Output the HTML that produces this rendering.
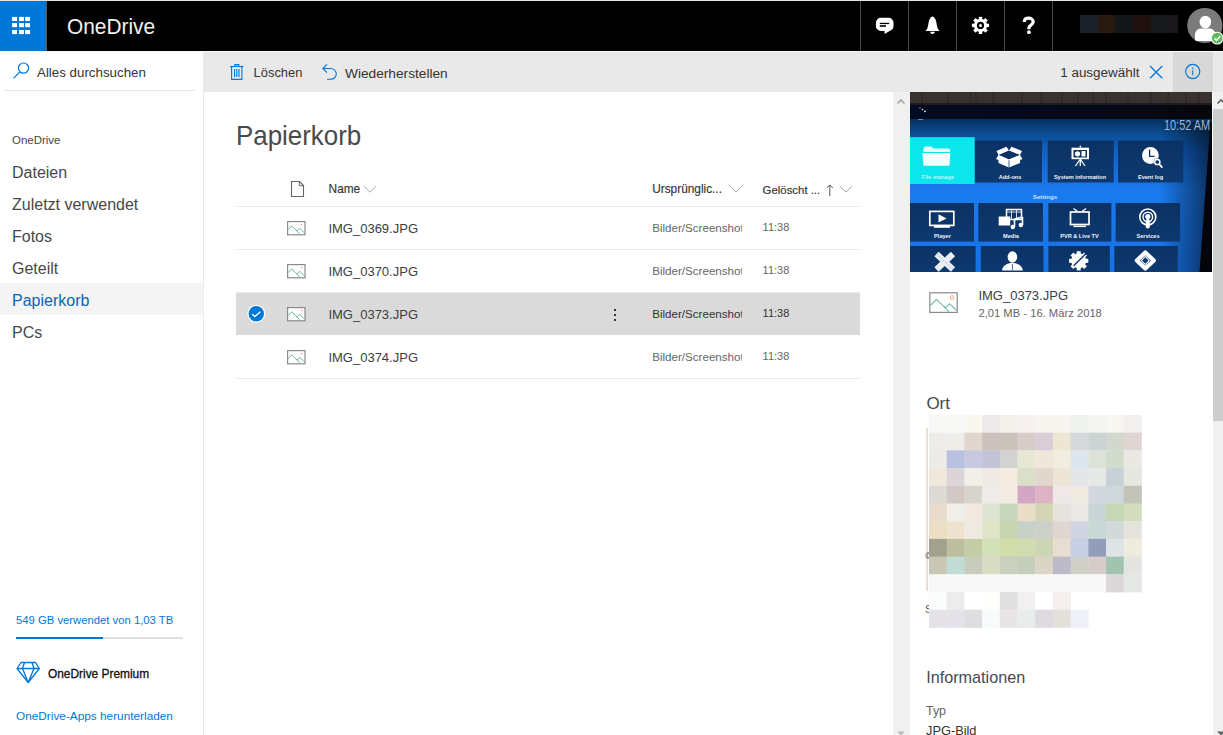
<!DOCTYPE html>
<html><head><meta charset="utf-8">
<style>
*{margin:0;padding:0;box-sizing:border-box}
html,body{width:1223px;height:735px;overflow:hidden;background:#fff;font-family:"Liberation Sans",sans-serif;color:#333}
.a{position:absolute}
.t{position:absolute;white-space:nowrap;line-height:1}
svg{position:absolute;overflow:visible}
</style></head><body>
<!-- top line -->
<div class="a" style="left:0;top:0;width:1223px;height:1px;background:#e4e4e4"></div>
<!-- header -->
<div class="a" style="left:0;top:1px;width:1223px;height:50px;background:#000"></div>
<div class="a" style="left:0;top:51px;width:1223px;height:1px;background:#f8f8f8"></div>
<div class="a" style="left:0;top:1px;width:46px;height:50px;background:#0078d7"></div>
<div class="a" style="left:46px;top:1px;width:1px;height:50px;background:#5a5a5a"></div>
<svg style="left:0;top:0" width="46" height="51">
  <g fill="#fff"><rect x="12.1" y="16.9" width="4.9" height="4.1"/><rect x="19" y="16.9" width="4.9" height="4.1"/><rect x="25.1" y="16.9" width="4.9" height="4.1"/><rect x="12.1" y="23.1" width="4.9" height="4.1"/><rect x="19" y="23.1" width="4.9" height="4.1"/><rect x="25.1" y="23.1" width="4.9" height="4.1"/><rect x="12.1" y="30" width="4.9" height="4.1"/><rect x="19" y="30" width="4.9" height="4.1"/><rect x="25.1" y="30" width="4.9" height="4.1"/></g>
</svg>
<div class="t" style="left:67px;top:16.2px;font-size:22.2px;color:#f0f0f0;transform:scaleX(0.94);transform-origin:0 0">OneDrive</div>

<!-- header dividers -->
<div class="a" style="left:860px;top:1px;width:1px;height:50px;background:#4a4a4a"></div>
<div class="a" style="left:908px;top:1px;width:1px;height:50px;background:#4a4a4a"></div>
<div class="a" style="left:956px;top:1px;width:1px;height:50px;background:#4a4a4a"></div>
<div class="a" style="left:1004px;top:1px;width:1px;height:50px;background:#4a4a4a"></div>
<div class="a" style="left:1052px;top:1px;width:1px;height:50px;background:#4a4a4a"></div>

<!-- header icons -->
<svg style="left:0;top:0" width="1223" height="51">
  <!-- chat -->
  <path d="M881 17.8 H888.5 A5 5 0 0 1 893.5 22.8 V26 A5 5 0 0 1 890 30.8 L884.6 34 L884.6 31 H881 A5 5 0 0 1 875.9 26 V22.8 A5 5 0 0 1 881 17.8 Z" fill="#fff"/>
  <rect x="879.8" y="22.8" width="9.4" height="1.3" fill="#000"/>
  <rect x="879.8" y="25.2" width="6.2" height="1.6" fill="#000"/>
  <!-- bell -->
  <path d="M932.5 16.6 C931.2 16.6 930.4 17.8 929.6 19.3 C928.5 21.5 928.4 25 927.6 27.5 C927 29.3 926 30.3 925.3 31 H939.7 C939 30.3 938 29.3 937.4 27.5 C936.6 25 936.5 21.5 935.4 19.3 C934.6 17.8 933.8 16.6 932.5 16.6 Z" fill="#fff"/>
  <path d="M930 31.8 H935 C934.5 33.4 933.6 34 932.5 34 C931.4 34 930.5 33.4 930 31.8 Z" fill="#fff"/>
  <!-- gear -->
  <g transform="translate(980.5 25.4)" fill="#fff">
    <circle r="6.6"/>
    <rect x="-1.7" y="-8.6" width="3.4" height="17.2"/>
    <rect x="-1.7" y="-8.6" width="3.4" height="17.2" transform="rotate(45)"/>
    <rect x="-1.7" y="-8.6" width="3.4" height="17.2" transform="rotate(90)"/>
    <rect x="-1.7" y="-8.6" width="3.4" height="17.2" transform="rotate(135)"/>
    <circle r="3.6" fill="#000"/>
    <circle r="1.5" fill="#fff"/>
  </g>
  <!-- question -->
  <path d="M1024.3 22 C1024.3 19.3 1026.2 18.2 1028.6 18.2 C1031.2 18.2 1033.2 19.6 1033.2 21.8 C1033.2 23.6 1032 24.5 1030.7 25.4 C1029.5 26.2 1028.9 26.8 1028.9 28.2 V29.2" fill="none" stroke="#fff" stroke-width="3.2"/>
  <circle cx="1028.9" cy="32.2" r="1.9" fill="#fff"/>
  <!-- name blur -->
  <rect x="1080" y="15" width="18" height="18" fill="#1c2029"/>
  <rect x="1098" y="15" width="17" height="18" fill="#28190f"/>
  <rect x="1115" y="15" width="18" height="18" fill="#14161a"/>
  <rect x="1133" y="15" width="18" height="18" fill="#1f120e"/>
  <rect x="1151" y="15" width="17" height="18" fill="#18191c"/>
  <rect x="1168" y="15" width="10" height="18" fill="#1b161a"/>
  <!-- avatar -->
  <defs><clipPath id="av"><circle cx="1204.8" cy="25.5" r="17.6"/></clipPath></defs>
  <circle cx="1204.8" cy="25.5" r="17.6" fill="#7b7b7b"/>
  <g clip-path="url(#av)" fill="#fff">
    <ellipse cx="1205.4" cy="22" rx="5.8" ry="6.3"/>
    <path d="M1195 41 V35 C1195 31 1198 28.6 1201 28.6 H1209.5 C1212.5 28.6 1215.5 31 1215.5 35 V41 Z"/>
  </g>
  <circle cx="1217.2" cy="38.1" r="6.4" fill="#fff"/>
  <circle cx="1217.2" cy="38.1" r="5.3" fill="#5cb85c"/>
  <path d="M1214.4 38.4 L1216.5 40.4 L1220.3 36.1" fill="none" stroke="#fff" stroke-width="1.6"/>
</svg>

<!-- toolbar -->
<div class="a" style="left:203px;top:52px;width:1020px;height:40px;background:#e9e9e9"></div>
<div class="a" style="left:1173px;top:52px;width:40px;height:40px;background:#d8d8d8"></div>
<svg style="left:0;top:0" width="1223" height="92">
  <!-- trash -->
  <g fill="none" stroke="#0078d7" stroke-width="1.1">
    <path d="M230 66.5 H243.5"/>
    <path d="M234.8 66.3 V64.6 H238.8 V66.3"/>
    <path d="M231.6 66.5 V79.4 H241.9 V66.5"/>
    <path d="M234.6 69 V77 M236.8 69 V77 M239 69 V77"/>
  </g>
  <!-- restore -->
  <g fill="none" stroke="#0078d7" stroke-width="1.1">
    <path d="M327 64.3 L322.8 68.5 L327 72.6"/>
    <path d="M323 68.5 H330.5 C333.8 68.5 336.3 71 336.3 74 C336.3 77 333.8 79.3 330.5 79.3 H327"/>
  </g>
  <!-- close X -->
  <path d="M1150 66 L1162.3 78.2 M1162.3 66 L1150 78.2" stroke="#0078d7" stroke-width="1.3" fill="none"/>
  <!-- info -->
  <circle cx="1192.7" cy="71.5" r="7.1" stroke="#0078d7" stroke-width="1.2" fill="none"/>
  <circle cx="1192.7" cy="68.3" r="0.8" fill="#0078d7"/>
  <path d="M1192.7 70.3 V75.2" stroke="#0078d7" stroke-width="1.1"/>
</svg>
<div class="t" style="left:253.6px;top:67.4px;font-size:12.9px;color:#333">Löschen</div>
<div class="t" style="left:345px;top:67px;font-size:13.7px;color:#333">Wiederherstellen</div>
<div class="t" style="left:1060.2px;top:66.3px;font-size:13.46px;color:#333">1 ausgewählt</div>

<!-- nav -->
<div class="a" style="left:203px;top:92px;width:1px;height:643px;background:#eaeaea"></div>
<div class="a" style="left:4px;top:90px;width:191px;height:1px;background:#e6e6e6"></div>
<div class="t" style="left:37px;top:65.7px;font-size:13.34px;color:#333">Alles durchsuchen</div>

<div class="t" style="left:12px;top:134.8px;font-size:11.46px;color:#444">OneDrive</div>
<div class="a" style="left:0;top:283px;width:203px;height:32px;background:#f4f4f4"></div>
<div class="t" style="left:12px;top:164.5px;font-size:16px;color:#484848">Dateien</div>
<div class="t" style="left:12px;top:196.5px;font-size:16px;color:#484848">Zuletzt verwendet</div>
<div class="t" style="left:12px;top:228.5px;font-size:16px;color:#484848">Fotos</div>
<div class="t" style="left:12px;top:260.5px;font-size:16px;color:#484848">Geteilt</div>
<div class="t" style="left:12px;top:292.5px;font-size:16px;color:#0a64b4">Papierkorb</div>
<div class="t" style="left:12px;top:324.5px;font-size:16px;color:#484848">PCs</div>

<div class="t" style="left:16px;top:615px;font-size:11.29px;color:#0078d7">549 GB verwendet von 1,03 TB</div>
<div class="a" style="left:16px;top:637px;width:167px;height:2px;background:#e0e0e0"></div>
<div class="a" style="left:16px;top:637px;width:87px;height:2px;background:#0078d7"></div>
<div class="t" style="left:48px;top:668.9px;font-size:11.9px;color:#111;-webkit-text-stroke:0.3px #111">OneDrive Premium</div>
<div class="t" style="left:16px;top:711.4px;font-size:11.82px;color:#0078d7">OneDrive-Apps herunterladen</div>

<!-- main -->
<div class="t" style="left:236px;top:122.2px;font-size:27.2px;color:#4a4a4a;transform:scaleX(0.952);transform-origin:0 0">Papierkorb</div>


<!-- list header -->
<svg style="left:290px;top:180px" width="16" height="18" viewBox="0 0 16 18">
  <path d="M1.5 1.5 H9.5 L13.5 5.5 V16.5 H1.5 Z" fill="none" stroke="#666" stroke-width="1.1"/>
  <path d="M9.3 1.5 V5.7 H13.5" fill="none" stroke="#666" stroke-width="1"/>
</svg>
<div class="t" style="left:328.6px;top:184.4px;font-size:11.85px;color:#333;-webkit-text-stroke:0.15px #333">Name</div>
<svg style="left:0;top:0" width="900" height="200">
  <path d="M364 186.2 L370 192.2 L376 186.2" fill="none" stroke="#a6a6a6" stroke-width="1"/>
  <path d="M730.3 186.2 L736 192 L741.7 186.2" fill="none" stroke="#a6a6a6" stroke-width="1"/>
  <path d="M839.8 186.2 L846 192 L852.2 186.2" fill="none" stroke="#a6a6a6" stroke-width="1"/>
  <path d="M829.8 185 V196 M826.8 188 L829.8 185 L832.8 188" fill="none" stroke="#444" stroke-width="0.9"/>
</svg>
<div class="t" style="left:652.2px;top:184.4px;font-size:11.85px;color:#333;-webkit-text-stroke:0.15px #333">Ursprünglic...</div>
<div class="t" style="left:762.6px;top:184.8px;font-size:11.4px;color:#333;-webkit-text-stroke:0.15px #333">Gelöscht ...</div>
<div class="a" style="left:236px;top:206px;width:624px;height:1px;background:#eaeaea"></div>
<div class="a" style="left:236px;top:292px;width:624px;height:43px;background:#dadada"></div>
<div class="a" style="left:236px;top:249px;width:624px;height:1px;background:#eaeaea"></div>
<svg style="left:287px;top:221px" width="19" height="15" viewBox="0 0 19 15">
  <rect x="0.6" y="0.6" width="17.4" height="13.2" fill="#fff" stroke="#8a8a8a" stroke-width="1.2"/>
  <path d="M1.2 8.6 L4.6 4.8 L10.2 10.1 L12.7 7.3 L17.6 12" fill="none" stroke="#6bb6a6" stroke-width="1"/>
  <path d="M9.2 9.2 L13.2 13.4" fill="none" stroke="#6bb6a6" stroke-width="1"/>
  <circle cx="14.7" cy="3.6" r="0.8" fill="#f29d80"/>
</svg>
<div class="t" style="left:328.4px;top:221.50px;font-size:13px;color:#3e3e3e">IMG_0369.JPG</div>
<div class="t" style="left:652.2px;top:222.34px;font-size:11.6px;color:#666;width:90px;overflow:hidden">Bilder/Screenshots</div>
<div class="t" style="left:762.6px;top:222.34px;font-size:11px;color:#666">11:38</div>
<div class="a" style="left:236px;top:292px;width:624px;height:1px;background:#eaeaea"></div>
<svg style="left:287px;top:264px" width="19" height="15" viewBox="0 0 19 15">
  <rect x="0.6" y="0.6" width="17.4" height="13.2" fill="#fff" stroke="#8a8a8a" stroke-width="1.2"/>
  <path d="M1.2 8.6 L4.6 4.8 L10.2 10.1 L12.7 7.3 L17.6 12" fill="none" stroke="#6bb6a6" stroke-width="1"/>
  <path d="M9.2 9.2 L13.2 13.4" fill="none" stroke="#6bb6a6" stroke-width="1"/>
  <circle cx="14.7" cy="3.6" r="0.8" fill="#f29d80"/>
</svg>
<div class="t" style="left:328.4px;top:264.50px;font-size:13px;color:#3e3e3e">IMG_0370.JPG</div>
<div class="t" style="left:652.2px;top:265.34px;font-size:11.6px;color:#666;width:90px;overflow:hidden">Bilder/Screenshots</div>
<div class="t" style="left:762.6px;top:265.34px;font-size:11px;color:#666">11:38</div>
<svg style="left:287px;top:307px" width="19" height="15" viewBox="0 0 19 15">
  <rect x="0.6" y="0.6" width="17.4" height="13.2" fill="#fff" stroke="#8a8a8a" stroke-width="1.2"/>
  <path d="M1.2 8.6 L4.6 4.8 L10.2 10.1 L12.7 7.3 L17.6 12" fill="none" stroke="#6bb6a6" stroke-width="1"/>
  <path d="M9.2 9.2 L13.2 13.4" fill="none" stroke="#6bb6a6" stroke-width="1"/>
  <circle cx="14.7" cy="3.6" r="0.8" fill="#f29d80"/>
</svg>
<div class="t" style="left:328.4px;top:307.50px;font-size:13px;color:#3e3e3e">IMG_0373.JPG</div>
<div class="t" style="left:652.2px;top:308.34px;font-size:11.6px;color:#333;width:90px;overflow:hidden">Bilder/Screenshots</div>
<div class="t" style="left:762.6px;top:308.34px;font-size:11px;color:#333">11:38</div>
<div class="a" style="left:236px;top:378px;width:624px;height:1px;background:#eaeaea"></div>
<svg style="left:287px;top:350px" width="19" height="15" viewBox="0 0 19 15">
  <rect x="0.6" y="0.6" width="17.4" height="13.2" fill="#fff" stroke="#8a8a8a" stroke-width="1.2"/>
  <path d="M1.2 8.6 L4.6 4.8 L10.2 10.1 L12.7 7.3 L17.6 12" fill="none" stroke="#6bb6a6" stroke-width="1"/>
  <path d="M9.2 9.2 L13.2 13.4" fill="none" stroke="#6bb6a6" stroke-width="1"/>
  <circle cx="14.7" cy="3.6" r="0.8" fill="#f29d80"/>
</svg>
<div class="t" style="left:328.4px;top:350.50px;font-size:13px;color:#3e3e3e">IMG_0374.JPG</div>
<div class="t" style="left:652.2px;top:351.34px;font-size:11.6px;color:#666;width:90px;overflow:hidden">Bilder/Screenshots</div>
<div class="t" style="left:762.6px;top:351.34px;font-size:11px;color:#666">11:38</div>
<svg style="left:0;top:0" width="900" height="400">
  <circle cx="256.3" cy="313.7" r="9" fill="#fff"/>
  <circle cx="256.3" cy="313.7" r="7.7" fill="#0078d7"/>
  <path d="M252.2 314.2 L254.8 316.6 L260.4 311.8" fill="none" stroke="#fff" stroke-width="1.3"/>
  <rect x="614" y="309" width="2" height="2" fill="#333"/>
  <rect x="614" y="314" width="2" height="2" fill="#333"/>
  <rect x="614" y="319" width="2" height="2" fill="#333"/>
</svg>


<!-- details image -->
<svg style="left:910px;top:92px" width="302" height="180" viewBox="0 0 302 180">
  <defs>
    <linearGradient id="bgv" x1="0" y1="0" x2="0" y2="1">
      <stop offset="0" stop-color="#06305e"/>
      <stop offset="0.15" stop-color="#06305e"/>
      <stop offset="0.24" stop-color="#0b4f98"/>
      <stop offset="0.32" stop-color="#1260c4"/>
      <stop offset="0.55" stop-color="#1a7aee"/>
      <stop offset="1" stop-color="#1672e6"/>
    </linearGradient>
    <linearGradient id="frame" x1="0" y1="0" x2="1" y2="0">
      <stop offset="0" stop-color="#000" stop-opacity="0"/>
      <stop offset="1" stop-color="#000" stop-opacity="0.6"/>
    </linearGradient>
    <linearGradient id="tile" x1="0" y1="0" x2="0" y2="1">
      <stop offset="0" stop-color="#0c3264"/>
      <stop offset="1" stop-color="#0d3970"/>
    </linearGradient>
  </defs>
  <rect x="0" y="0" width="302" height="180" fill="url(#bgv)"/>
  <rect x="0" y="0" width="302" height="11.5" fill="#3b3230"/>
  <rect x="0" y="11" width="302" height="2" fill="#1e1a22"/>
  <g stroke="#2a201d" stroke-width="0.7">
    <path d="M12 0V13M38 0V13M61 0V12M66 0V13M83 0V13M112 0V13M131 0V13M152 0V12M168 0V13M183 0V13M196 0V13M218 0V13M241 0V13M258 0V13M276 0V13M289 0V13"/>
  </g>
  <linearGradient id="band" x1="0" y1="0" x2="1" y2="0"><stop offset="0" stop-color="#030b22"/><stop offset="0.6" stop-color="#050a1a"/><stop offset="1" stop-color="#07070c"/></linearGradient>
  <rect x="0" y="13" width="302" height="14" fill="url(#band)"/>
  <circle cx="10" cy="15.8" r="0.6" fill="#dde6f4"/><circle cx="12.5" cy="17.5" r="0.8" fill="#e8eef8"/><circle cx="15" cy="19.3" r="0.9" fill="#e8eef8"/><rect x="8" y="27" width="5" height="0.8" fill="#8aa0c0"/>
  <!-- right dark frame -->
  <path d="M250 30 L302 30 L290 180 L250 180 Z" fill="url(#frame)"/>
  <path d="M300.5 30 L302 30 V180 H289.5 Z" fill="#03050a"/>
  <!-- tiles -->
  <g fill="url(#tile)">
    <rect x="65" y="48.5" width="67" height="42"/>
    <rect x="137.7" y="48.5" width="66" height="42"/>
    <rect x="208" y="48.5" width="65.4" height="42"/>
    <rect x="0" y="111" width="64" height="38.6"/>
    <rect x="68.3" y="111" width="64.7" height="38.6"/>
    <rect x="138.4" y="111" width="63" height="38.6"/>
    <rect x="205.6" y="111" width="64.6" height="38.6"/>
    <rect x="0" y="154" width="65.6" height="26"/>
    <rect x="70.8" y="154" width="62.7" height="26"/>
    <rect x="138.4" y="154" width="61.4" height="26"/>
    <rect x="204.3" y="154" width="63.4" height="26"/>
  </g>
  <rect x="0" y="45.2" width="64.6" height="46.8" fill="#0ae6ec"/>
  <text x="254" y="37.8" font-family="Liberation Sans" font-size="14.2" fill="#a3b6d2" textLength="46" lengthAdjust="spacingAndGlyphs">10:52 AM</text>
  <text x="135" y="106.8" font-family="Liberation Sans" font-size="6.2" font-weight="700" fill="#cfe2f8" text-anchor="middle">Settings</text>
  <g font-family="Liberation Sans" font-size="5.6" font-weight="700" fill="#eef3fa" text-anchor="middle">
    <text x="28" y="87.3" fill="#bdf4f6">File manage</text>
    <text x="100" y="86.6">Add-ons</text>
    <text x="170" y="87">System information</text>
    <text x="240.5" y="87">Event log</text>
    <text x="32.5" y="146.4">Player</text>
    <text x="101" y="146.4">Media</text>
    <text x="169.5" y="146.4">PVR &amp; Live TV</text>
    <text x="238" y="146.4">Services</text>
  </g>
  <g fill="#fff">
    <!-- folder -->
    <path d="M13.5 57 Q13.5 54.5 15.5 54.5 H21.5 L23.5 56.5 H38.5 Q40 56.5 40 58 V60 H13.5 Z" fill="#e6f9fa"/>
    <path d="M12.4 61 H40.4 L39.4 73.8 H13.4 Z" fill="#f2fdfd"/>
    <!-- box -->
    <path d="M88.5 63 L99 58.5 L110 63 L99 67.5 Z" fill="#0c3264"/>
    <path d="M88.5 63 L99 67.5 L110 63 V71 L99 75.5 L88.5 71 Z"/>
    <path d="M99 67.5 V75.5" stroke="#0c3264" stroke-width="0.8"/>
    <path d="M88.5 63 L86.5 59 L96.5 54.7 L99 58.5 Z M110 63 L112 59 L101.5 54.7 L99 58.5 Z"/>
    <path d="M88.5 63 L86 67 L96.5 71.5 L99 67.5 Z M110 63 L112.5 67 L102 71.5 L99 67.5 Z"/>
    <!-- easel -->
    <rect x="161.5" y="55.7" width="17.5" height="11.5"/>
    <rect x="163.5" y="58" width="13.5" height="7.5" fill="#0c3264"/>
    <circle cx="167.5" cy="61.8" r="2.6"/>
    <rect x="171.5" y="59" width="4" height="5.5"/>
    <rect x="169.6" y="53.7" width="1.5" height="2"/>
    <path d="M170.3 67 L165.5 74 M170.3 67 L175 74 M170.3 67 V74" stroke="#fff" stroke-width="1.3"/>
    <!-- clock -->
    <circle cx="240.4" cy="63.5" r="8.4"/>
    <path d="M239.6 57.5 V64.3 H244.5" stroke="#0c3264" stroke-width="1.3" fill="none"/>
    <circle cx="247.3" cy="70" r="3.6" fill="#0c3264"/>
    <circle cx="247.3" cy="70" r="2.6" fill="none" stroke="#fff" stroke-width="1.5"/>
    <path d="M249.2 72 L252.3 75.6" stroke="#fff" stroke-width="1.8"/>
    <!-- player tv -->
    <rect x="19.8" y="119.4" width="24" height="14" fill="none" stroke="#fff" stroke-width="1.7"/>
    <path d="M28.5 122.3 L36.5 126.4 L28.5 130.5 Z"/>
    <rect x="24" y="134" width="16" height="1.8"/>
    <!-- media -->
    <rect x="96.5" y="117.5" width="15" height="10" fill="none" stroke="#fff" stroke-width="1.5"/>
    <path d="M96.5 120 H111.5 M101.5 117.5 V127.5 M106.5 117.5 V127.5" stroke="#fff" stroke-width="0.8"/>
    <rect x="88.7" y="124.5" width="11.5" height="9"/>
    <path d="M104.5 127 V135 M112.5 125 V133 M104.5 127 L112.5 125" stroke="#fff" stroke-width="1.6" fill="none"/>
    <circle cx="102.8" cy="135" r="2.2"/><circle cx="110.8" cy="133" r="2.2"/>
    <!-- pvr tv -->
    <rect x="160.5" y="120" width="18.5" height="12.5" fill="none" stroke="#fff" stroke-width="1.7"/>
    <path d="M163.5 116.5 L167.5 119.5 M176 116.5 L172 119.5" stroke="#fff" stroke-width="1.2"/>
    <rect x="163.5" y="133.6" width="12.5" height="1.5"/>
    <!-- services -->
    <circle cx="237.8" cy="125" r="8" fill="none" stroke="#fff" stroke-width="1.6"/>
    <circle cx="237.8" cy="125" r="4.8" fill="none" stroke="#fff" stroke-width="1.4"/>
    <circle cx="237.8" cy="124.5" r="2.6"/>
    <rect x="235.8" y="127" width="4" height="9.5" rx="1.8"/>
    <!-- tools -->
    <path d="M26.5 162 L43 177.5 M43 162 L26.5 177.5" stroke="#e8eef6" stroke-width="6.2"/>
    <path d="M26.5 162 L43 177.5" stroke="#9fb0c8" stroke-width="1" stroke-dasharray="1.5 1.5"/>
    <!-- person -->
    <ellipse cx="102.4" cy="165" rx="4.8" ry="5.8"/>
    <path d="M92 178.5 C92.5 173.5 97 171 102.4 171 C108 171 112.3 173.5 112.8 178.5 Z"/>
    <path d="M102.4 172 V178" stroke="#0c3264" stroke-width="0.8"/>
    <!-- gear -->
    <g transform="translate(168.7 168.8)">
      <circle r="7.5"/>
      <rect x="-2" y="-9.6" width="4" height="19.2"/>
      <rect x="-2" y="-9.6" width="4" height="19.2" transform="rotate(45)"/>
      <rect x="-2" y="-9.6" width="4" height="19.2" transform="rotate(90)"/>
      <rect x="-2" y="-9.6" width="4" height="19.2" transform="rotate(135)"/>
      <path d="M-5 5 L8 -8" stroke="#0c3264" stroke-width="1.4"/>
    </g>
    <!-- diamond -->
    <path d="M235.3 160.5 L243.8 168.5 L235.3 176.5 L226.8 168.5 Z" stroke="#fff" stroke-width="4.2" fill="none" stroke-linejoin="round"/>
    <rect x="232.5" y="165.7" width="5.6" height="5.6" transform="rotate(45 235.3 168.5)" fill="none" stroke="#fff" stroke-width="1"/>
  </g>
</svg>

<!-- detail file info -->
<svg style="left:929px;top:292px" width="30" height="22" viewBox="0 0 30 22">
  <rect x="0.8" y="0.8" width="27.4" height="19.6" fill="#fff" stroke="#8a8a8a" stroke-width="1.2"/>
  <path d="M1.4 13.5 L7.5 7.5 L16.5 15.8 L20.5 11.8 L27.8 18.5" fill="none" stroke="#74bcae" stroke-width="1.1"/>
  <path d="M14.5 14 L20 19.8" fill="none" stroke="#74bcae" stroke-width="1.1"/>
  <circle cx="23" cy="5.5" r="1.8" fill="none" stroke="#f29d80" stroke-width="1"/>
</svg>
<div class="t" style="left:978.4px;top:288.5px;font-size:13px;color:#3e3e3e">IMG_0373.JPG</div>
<div class="t" style="left:978.4px;top:307.8px;font-size:11.23px;color:#666">2,01 MB - 16. März 2018</div>
<div class="t" style="left:926.4px;top:395px;font-size:17px;color:#4a4a4a">Ort</div>
<div class="t" style="left:926.2px;top:669.3px;font-size:16.2px;color:#4a4a4a">Informationen</div>
<div class="t" style="left:926px;top:704.8px;font-size:12.4px;color:#666">Typ</div>
<div class="t" style="left:926px;top:725px;font-size:12.8px;color:#333">JPG-Bild</div>

<!-- details scrollbar left -->
<div class="a" style="left:893px;top:92px;width:17px;height:643px;background:#f0f0f0"></div>
<div class="a" style="left:1212px;top:92px;width:1px;height:643px;background:#fff"></div>
<div class="a" style="left:1213px;top:92px;width:10px;height:643px;background:#f0f0f0"></div>
<div class="a" style="left:1213px;top:109px;width:10px;height:312px;background:#cdcdcd"></div>
<svg style="left:0;top:0" width="1223" height="735">
  <path d="M897.5 103.5 L901 100 L904.5 103.5" fill="none" stroke="#a3a3a3" stroke-width="1.6"/>
  <path d="M1217.5 103.5 L1221 100 L1224.5 103.5" fill="none" stroke="#606060" stroke-width="1.6"/>
  <path d="M897 731.5 L901 735.5 L905 731.5 Z" fill="#bcbcbc"/>
  <path d="M1217 731.5 L1221 735.5 L1225 731.5 Z" fill="#606060"/>
  <!-- search icon -->
  <circle cx="23.5" cy="68.1" r="5.1" fill="none" stroke="#0078d7" stroke-width="1.2"/>
  <path d="M19.8 71.8 L13.6 78.3" stroke="#0078d7" stroke-width="1.2"/>
  <!-- diamond icon -->
  <g fill="none" stroke="#0078d7" stroke-width="1.3" stroke-linejoin="round">
    <path d="M21 662.5 H35.5 L39.3 668.5 L28.2 682.5 L17 668.5 Z"/>
    <path d="M17 668.5 H39.3 M24.5 662.5 L22.5 668.5 L28.2 682.5 L34 668.5 L32 662.5"/>
  </g>
</svg>
<svg style="left:929px;top:415px" width="214" height="214"><rect x="0.0" y="0.0" width="18.1" height="18.1" fill="#f8f8f6"/><rect x="17.7" y="0.0" width="18.1" height="18.1" fill="#f8f8f7"/><rect x="35.4" y="0.0" width="18.1" height="18.1" fill="#f8f8f1"/><rect x="53.1" y="0.0" width="18.1" height="18.1" fill="#ebe9ea"/><rect x="70.8" y="0.0" width="18.1" height="18.1" fill="#f3efeb"/><rect x="88.5" y="0.0" width="18.1" height="18.1" fill="#f6f1ef"/><rect x="106.2" y="0.0" width="18.1" height="18.1" fill="#f6f4ef"/><rect x="123.9" y="0.0" width="18.1" height="18.1" fill="#f8f5f0"/><rect x="141.6" y="0.0" width="18.1" height="18.1" fill="#eef1ec"/><rect x="159.3" y="0.0" width="18.1" height="18.1" fill="#f4f5f2"/><rect x="177.0" y="0.0" width="18.1" height="18.1" fill="#f8f6f0"/><rect x="194.7" y="0.0" width="18.1" height="18.1" fill="#f1f0ee"/><rect x="0.0" y="17.7" width="18.1" height="18.1" fill="#eeece8"/><rect x="17.7" y="17.7" width="18.1" height="18.1" fill="#eeede7"/><rect x="35.4" y="17.7" width="18.1" height="18.1" fill="#e0d6cd"/><rect x="53.1" y="17.7" width="18.1" height="18.1" fill="#cdc1be"/><rect x="70.8" y="17.7" width="18.1" height="18.1" fill="#c9c3bb"/><rect x="88.5" y="17.7" width="18.1" height="18.1" fill="#d7ccc8"/><rect x="106.2" y="17.7" width="18.1" height="18.1" fill="#d9cdd6"/><rect x="123.9" y="17.7" width="18.1" height="18.1" fill="#ece6d2"/><rect x="141.6" y="17.7" width="18.1" height="18.1" fill="#d5d9dc"/><rect x="159.3" y="17.7" width="18.1" height="18.1" fill="#ccd3d3"/><rect x="177.0" y="17.7" width="18.1" height="18.1" fill="#d3d8cf"/><rect x="194.7" y="17.7" width="18.1" height="18.1" fill="#dfd5d3"/><rect x="0.0" y="35.4" width="18.1" height="18.1" fill="#edebe8"/><rect x="17.7" y="35.4" width="18.1" height="18.1" fill="#b9c1e0"/><rect x="35.4" y="35.4" width="18.1" height="18.1" fill="#c8c9e0"/><rect x="53.1" y="35.4" width="18.1" height="18.1" fill="#c4c4d9"/><rect x="70.8" y="35.4" width="18.1" height="18.1" fill="#d2d2d2"/><rect x="88.5" y="35.4" width="18.1" height="18.1" fill="#e7e7d6"/><rect x="106.2" y="35.4" width="18.1" height="18.1" fill="#efe6dc"/><rect x="123.9" y="35.4" width="18.1" height="18.1" fill="#f1ecdd"/><rect x="141.6" y="35.4" width="18.1" height="18.1" fill="#dde5ee"/><rect x="159.3" y="35.4" width="18.1" height="18.1" fill="#dde1d8"/><rect x="177.0" y="35.4" width="18.1" height="18.1" fill="#d2dccc"/><rect x="194.7" y="35.4" width="18.1" height="18.1" fill="#ebe8e4"/><rect x="0.0" y="53.1" width="18.1" height="18.1" fill="#f0e8da"/><rect x="17.7" y="53.1" width="18.1" height="18.1" fill="#dcd5d8"/><rect x="35.4" y="53.1" width="18.1" height="18.1" fill="#f1efe7"/><rect x="53.1" y="53.1" width="18.1" height="18.1" fill="#efe9e3"/><rect x="70.8" y="53.1" width="18.1" height="18.1" fill="#f3ebdf"/><rect x="88.5" y="53.1" width="18.1" height="18.1" fill="#d9dfc8"/><rect x="106.2" y="53.1" width="18.1" height="18.1" fill="#e1d7cd"/><rect x="123.9" y="53.1" width="18.1" height="18.1" fill="#ede5d5"/><rect x="141.6" y="53.1" width="18.1" height="18.1" fill="#e3e7ea"/><rect x="159.3" y="53.1" width="18.1" height="18.1" fill="#e6e8e5"/><rect x="177.0" y="53.1" width="18.1" height="18.1" fill="#c6d2d8"/><rect x="194.7" y="53.1" width="18.1" height="18.1" fill="#e5e7e0"/><rect x="0.0" y="70.8" width="18.1" height="18.1" fill="#ddd9d5"/><rect x="17.7" y="70.8" width="18.1" height="18.1" fill="#d2c8c5"/><rect x="35.4" y="70.8" width="18.1" height="18.1" fill="#d6d4cd"/><rect x="53.1" y="70.8" width="18.1" height="18.1" fill="#efebe9"/><rect x="70.8" y="70.8" width="18.1" height="18.1" fill="#f3eae1"/><rect x="88.5" y="70.8" width="18.1" height="18.1" fill="#d3a6c6"/><rect x="106.2" y="70.8" width="18.1" height="18.1" fill="#ddb4c4"/><rect x="123.9" y="70.8" width="18.1" height="18.1" fill="#efe8e8"/><rect x="141.6" y="70.8" width="18.1" height="18.1" fill="#efebe1"/><rect x="159.3" y="70.8" width="18.1" height="18.1" fill="#d3d7de"/><rect x="177.0" y="70.8" width="18.1" height="18.1" fill="#cfd8db"/><rect x="194.7" y="70.8" width="18.1" height="18.1" fill="#c3c3b9"/><rect x="0.0" y="88.5" width="18.1" height="18.1" fill="#e8dbcd"/><rect x="17.7" y="88.5" width="18.1" height="18.1" fill="#efeee8"/><rect x="35.4" y="88.5" width="18.1" height="18.1" fill="#f1e8e0"/><rect x="53.1" y="88.5" width="18.1" height="18.1" fill="#dfe3d2"/><rect x="70.8" y="88.5" width="18.1" height="18.1" fill="#c8d5bd"/><rect x="88.5" y="88.5" width="18.1" height="18.1" fill="#e9ddc8"/><rect x="106.2" y="88.5" width="18.1" height="18.1" fill="#d3d6b4"/><rect x="123.9" y="88.5" width="18.1" height="18.1" fill="#e4e3dd"/><rect x="141.6" y="88.5" width="18.1" height="18.1" fill="#ebe9e7"/><rect x="159.3" y="88.5" width="18.1" height="18.1" fill="#c8d4d5"/><rect x="177.0" y="88.5" width="18.1" height="18.1" fill="#c8d6b8"/><rect x="194.7" y="88.5" width="18.1" height="18.1" fill="#d3dcbc"/><rect x="0.0" y="106.2" width="18.1" height="18.1" fill="#ecdec4"/><rect x="17.7" y="106.2" width="18.1" height="18.1" fill="#ede3cf"/><rect x="35.4" y="106.2" width="18.1" height="18.1" fill="#eee9e1"/><rect x="53.1" y="106.2" width="18.1" height="18.1" fill="#dfe5c6"/><rect x="70.8" y="106.2" width="18.1" height="18.1" fill="#c9d4b1"/><rect x="88.5" y="106.2" width="18.1" height="18.1" fill="#c8d0c8"/><rect x="106.2" y="106.2" width="18.1" height="18.1" fill="#ccd0c9"/><rect x="123.9" y="106.2" width="18.1" height="18.1" fill="#e0d6d0"/><rect x="141.6" y="106.2" width="18.1" height="18.1" fill="#d0d4e0"/><rect x="159.3" y="106.2" width="18.1" height="18.1" fill="#c7d8d7"/><rect x="177.0" y="106.2" width="18.1" height="18.1" fill="#d3d8d9"/><rect x="194.7" y="106.2" width="18.1" height="18.1" fill="#e4e4dc"/><rect x="0.0" y="123.9" width="18.1" height="18.1" fill="#a1a18e"/><rect x="17.7" y="123.9" width="18.1" height="18.1" fill="#bcbf9d"/><rect x="35.4" y="123.9" width="18.1" height="18.1" fill="#c4cca8"/><rect x="53.1" y="123.9" width="18.1" height="18.1" fill="#d3e0b9"/><rect x="70.8" y="123.9" width="18.1" height="18.1" fill="#d1dea9"/><rect x="88.5" y="123.9" width="18.1" height="18.1" fill="#d1dcb0"/><rect x="106.2" y="123.9" width="18.1" height="18.1" fill="#ccd6b4"/><rect x="123.9" y="123.9" width="18.1" height="18.1" fill="#e8ddd1"/><rect x="141.6" y="123.9" width="18.1" height="18.1" fill="#c6cfe3"/><rect x="159.3" y="123.9" width="18.1" height="18.1" fill="#929db9"/><rect x="177.0" y="123.9" width="18.1" height="18.1" fill="#dee4e6"/><rect x="194.7" y="123.9" width="18.1" height="18.1" fill="#eeecdc"/><rect x="0.0" y="141.6" width="18.1" height="18.1" fill="#c9c7b3"/><rect x="17.7" y="141.6" width="18.1" height="18.1" fill="#c2dbd5"/><rect x="35.4" y="141.6" width="18.1" height="18.1" fill="#c7ccbb"/><rect x="53.1" y="141.6" width="18.1" height="18.1" fill="#d8dcc2"/><rect x="70.8" y="141.6" width="18.1" height="18.1" fill="#c9d0c0"/><rect x="88.5" y="141.6" width="18.1" height="18.1" fill="#c5cdbb"/><rect x="106.2" y="141.6" width="18.1" height="18.1" fill="#dbd5c6"/><rect x="123.9" y="141.6" width="18.1" height="18.1" fill="#bcb9c8"/><rect x="141.6" y="141.6" width="18.1" height="18.1" fill="#d0cfc8"/><rect x="159.3" y="141.6" width="18.1" height="18.1" fill="#d6cdcb"/><rect x="177.0" y="141.6" width="18.1" height="18.1" fill="#a0c4b0"/><rect x="194.7" y="141.6" width="18.1" height="18.1" fill="#e4e4e3"/><rect x="0.0" y="159.3" width="18.1" height="18.1" fill="#f8f8f8"/><rect x="17.7" y="159.3" width="18.1" height="18.1" fill="#f8f8f8"/><rect x="35.4" y="159.3" width="18.1" height="18.1" fill="#f8f8f8"/><rect x="53.1" y="159.3" width="18.1" height="18.1" fill="#f8f8f8"/><rect x="70.8" y="159.3" width="18.1" height="18.1" fill="#f8f8f8"/><rect x="88.5" y="159.3" width="18.1" height="18.1" fill="#f8f8f8"/><rect x="106.2" y="159.3" width="18.1" height="18.1" fill="#f8f8f8"/><rect x="123.9" y="159.3" width="18.1" height="18.1" fill="#f8f8f8"/><rect x="141.6" y="159.3" width="18.1" height="18.1" fill="#f8f8f8"/><rect x="159.3" y="159.3" width="18.1" height="18.1" fill="#f8f8f8"/><rect x="177.0" y="159.3" width="18.1" height="18.1" fill="#dcd7d9"/><rect x="194.7" y="159.3" width="18.1" height="18.1" fill="#e6e8e6"/><rect x="0.0" y="177.0" width="18.1" height="18.1" fill="#fbfcfc"/><rect x="17.7" y="177.0" width="18.1" height="18.1" fill="#ececec"/><rect x="35.4" y="177.0" width="18.1" height="18.1" fill="#ffffff"/><rect x="53.1" y="177.0" width="18.1" height="18.1" fill="#fefefb"/><rect x="70.8" y="177.0" width="18.1" height="18.1" fill="#e0dfe0"/><rect x="88.5" y="177.0" width="18.1" height="18.1" fill="#f1eff0"/><rect x="106.2" y="177.0" width="18.1" height="18.1" fill="#ffffff"/><rect x="123.9" y="177.0" width="18.1" height="18.1" fill="#f5f0ee"/><rect x="0.0" y="194.7" width="18.1" height="18.1" fill="#e4e2e6"/><rect x="17.7" y="194.7" width="18.1" height="18.1" fill="#e5e2e9"/><rect x="35.4" y="194.7" width="18.1" height="18.1" fill="#dedde0"/><rect x="53.1" y="194.7" width="18.1" height="18.1" fill="#f7fbfb"/><rect x="70.8" y="194.7" width="18.1" height="18.1" fill="#e9e5e6"/><rect x="88.5" y="194.7" width="18.1" height="18.1" fill="#e8ecea"/><rect x="106.2" y="194.7" width="18.1" height="18.1" fill="#dfd9e0"/><rect x="123.9" y="194.7" width="18.1" height="18.1" fill="#e3dfdb"/><rect x="141.6" y="194.7" width="18.1" height="18.1" fill="#eef1f8"/></svg>

<div class="a" style="left:926px;top:428px;width:2px;height:163px;background:#e6e0d2"></div>
<div class="t" style="left:925px;top:552px;font-size:9px;color:#444;width:4px;overflow:hidden">©</div>
<div class="t" style="left:925px;top:604px;font-size:11px;color:#555;width:4px;overflow:hidden">S</div>
</body></html>
